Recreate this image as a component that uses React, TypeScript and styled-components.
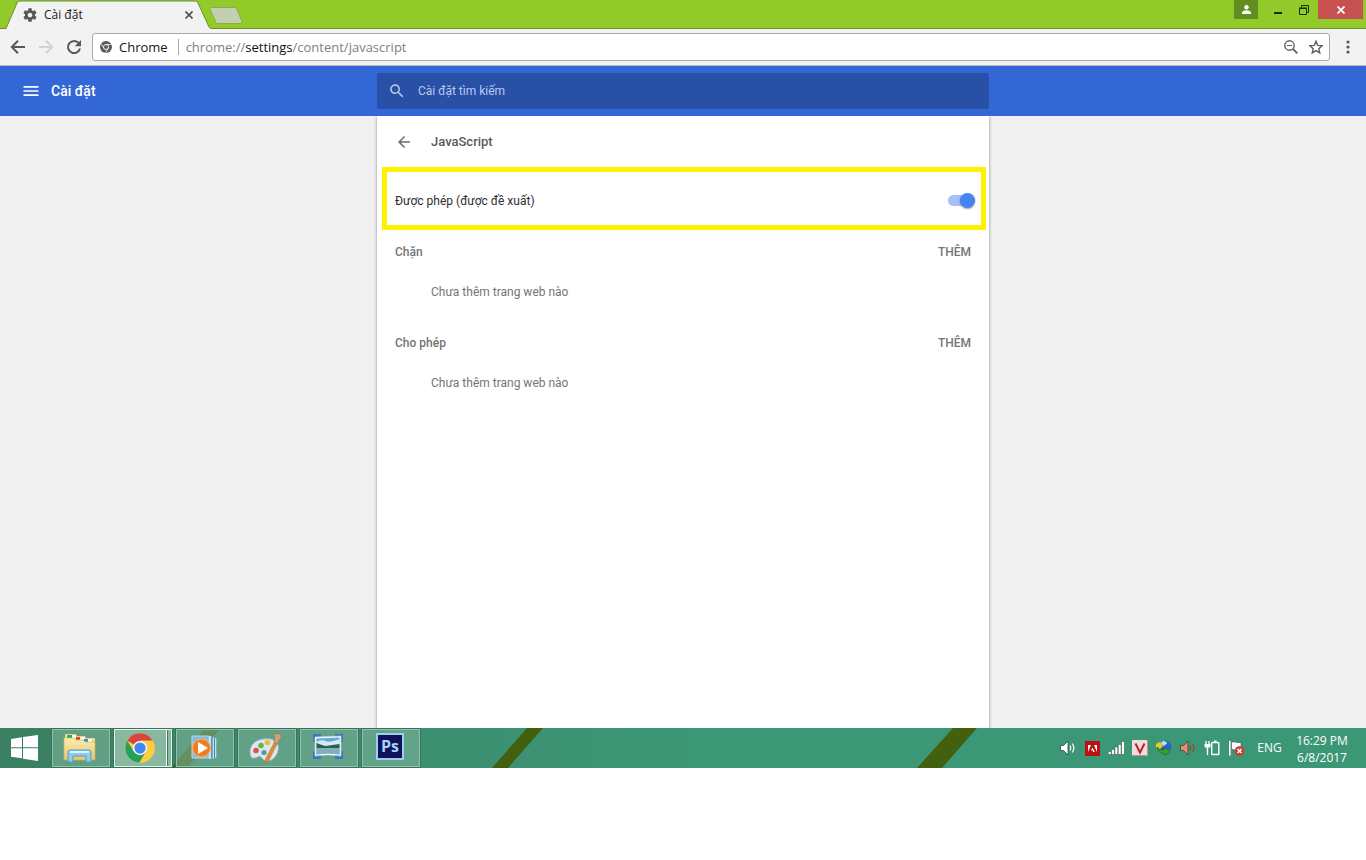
import React, { useState } from "react";
import styled, { createGlobalStyle } from "styled-components";

const GlobalStyle = createGlobalStyle`
  *, *::before, *::after { box-sizing: border-box; }
  body {
    margin: 0;
    background: #ffffff;
    font-family: Roboto, "Liberation Sans", sans-serif;
    font-size: 12px;
    line-height: 16px;
  }
  button, input { font: inherit; color: inherit; }
  svg { display: block; flex: none; }
`;

const systemFont = `"Open Sans", "Noto Sans", sans-serif`;

const PlainButton = styled.button`
  display: flex;
  align-items: center;
  justify-content: center;
  flex: none;
  padding: 0;
  border: 0;
  background: transparent;
  cursor: pointer;
`;

/* ---------- Browser frame ---------- */

const TabStrip = styled.header`
  display: flex;
  align-items: flex-start;
  height: 29px;
  padding-left: 6px;
  background: #92ca2a;
  border-bottom: 1px solid #6b8f2c;
  font-family: ${systemFont};
`;

const Tab = styled.div`
  position: relative;
  display: flex;
  align-items: center;
  width: 206px;
  height: 29px;
  padding: 1px 16px 0 16px;
  gap: 6px;
  color: #1c1c1c;
`;

const TabShape = styled.svg`
  position: absolute;
  left: 0;
  top: 0;
`;

const TabIcon = styled.svg`
  position: relative;
`;

const TabTitle = styled.span`
  position: relative;
  flex: 1;
  font-size: 12px;
`;

const TabClose = styled(PlainButton)`
  position: relative;
  width: 14px;
  height: 14px;
`;

const NewTab = styled(PlainButton)`
  height: 29px;
  width: 36px;
  margin-left: -4px;
`;

const WindowButtons = styled.div`
  display: flex;
  margin-left: auto;
  padding-right: 3px;
`;

const WindowButton = styled(PlainButton)<{ $width: number; $fill?: string }>`
  width: ${(p) => p.$width}px;
  height: 19px;
  background: ${(p) => p.$fill ?? "transparent"};
`;

const CloseWindow = styled(WindowButton)`
  margin-left: 8px;
`;

const Toolbar = styled.nav`
  display: flex;
  align-items: center;
  height: 37px;
  padding: 0 4px;
  background: #f2f2f2;
  border-bottom: 1px solid #b4bccb;
  font-family: ${systemFont};
`;

const ToolButton = styled(PlainButton)`
  width: 28px;
  height: 28px;
`;

const Omnibox = styled.div`
  display: flex;
  align-items: center;
  flex: 1;
  height: 28px;
  margin: 0 4px;
  padding: 0 1px 0 7px;
  background: #ffffff;
  border: 1px solid #a9a9a9;
  border-radius: 3px;
  font-size: 13px;
  line-height: 20px;
`;

const SiteChip = styled(PlainButton)`
  gap: 7px;
  color: #161616;
`;

const Divider = styled.span`
  width: 1px;
  height: 16px;
  margin: 0 7px 0 10px;
  background: #a6a6a6;
`;

const Address = styled.button`
  flex: 1;
  padding: 0;
  border: 0;
  background: transparent;
  color: #808080;
  text-align: left;
  cursor: text;
`;

const AddressHost = styled.span`
  color: #111111;
`;

const AddressInput = styled.input`
  flex: 1;
  padding: 0;
  border: 0;
  outline: 0;
`;

const OmniButton = styled(PlainButton)`
  width: 25px;
  height: 24px;
`;

/* ---------- Settings page ---------- */

const columns = "minmax(0, 1fr) minmax(0, 612px) minmax(0, 1fr)";

const SettingsBar = styled.header`
  display: grid;
  grid-template-columns: ${columns};
  align-items: center;
  height: 50px;
  background: #3367d6;
  color: #ffffff;
`;

const Brand = styled.div`
  display: flex;
  align-items: center;
  gap: 10px;
  padding-left: 21px;
`;

const BrandTitle = styled.h1`
  margin: 0;
  font-size: 14px;
  font-weight: 500;
`;

const Search = styled.label`
  display: flex;
  align-items: center;
  gap: 12px;
  height: 36px;
  padding: 0 11px;
  border-radius: 2px;
  background: #2850a7;
`;

const SearchInput = styled.input`
  flex: 1;
  padding: 0;
  border: 0;
  outline: 0;
  background: transparent;
  font-size: 12px;
  &::placeholder {
    color: #b9c9ec;
    opacity: 1;
  }
`;

const SettingsBody = styled.main`
  display: grid;
  grid-template-columns: ${columns};
  min-height: 612px;
  background: #f0f0f0;
  overflow: hidden;
`;

const Card = styled.section`
  grid-column: 2;
  background: #ffffff;
  box-shadow: 0 1px 3px rgba(0, 0, 0, 0.45);
  color: #757575;
`;

const CardHead = styled.div`
  display: flex;
  align-items: center;
  gap: 18px;
  height: 51px;
  padding-left: 18px;
`;

const CardTitle = styled.h2`
  margin: 0;
  color: #5a5a5a;
  font-size: 13px;
  font-weight: 500;
`;

const ToggleRow = styled.label`
  display: flex;
  align-items: center;
  justify-content: space-between;
  height: 63px;
  margin: 0 3px 0 5px;
  padding: 4px 6px 0 8px;
  border: 5px solid #fff200;
  color: #2e2e2e;
`;

const Switch = styled.input`
  appearance: none;
  position: relative;
  width: 27px;
  height: 16px;
  margin: 0;
  cursor: pointer;
  &::before {
    content: "";
    position: absolute;
    left: 0;
    top: 2px;
    width: 25px;
    height: 11px;
    border-radius: 6px;
    background: #bdbdbd;
  }
  &::after {
    content: "";
    position: absolute;
    left: 0;
    top: 0;
    width: 15px;
    height: 15px;
    border-radius: 50%;
    background: #fafafa;
    box-shadow: 0 1px 2px rgba(0, 0, 0, 0.4);
  }
  &:checked::before { background: #a3c0fa; }
  &:checked::after { left: 12px; background: #4484f4; }
`;

const SiteGroup = styled.section`
  margin-bottom: 11px;
`;

const GroupHead = styled.div`
  display: flex;
  align-items: center;
  justify-content: space-between;
  height: 44px;
  padding: 0 18px;
`;

const GroupTitle = styled.h3`
  margin: 0;
  font-size: 12px;
  font-weight: 500;
`;

const AddButton = styled(PlainButton)`
  font-weight: 500;
`;

const EmptyNote = styled.p`
  display: flex;
  align-items: center;
  height: 36px;
  margin: 0;
  padding-left: 54px;
`;

/* ---------- Windows task bar ---------- */

const TaskBar = styled.footer`
  position: relative;
  display: flex;
  align-items: center;
  height: 40px;
  background: linear-gradient(90deg, #3a8062 0, #3c8f71 440px, #3c9776 700px, #3c9776 100%);
  color: #ffffff;
  font-family: ${systemFont};
  overflow: hidden;
`;

const Wallpaper = styled.svg`
  position: absolute;
  left: 0;
  top: 0;
`;

const StartButton = styled(PlainButton)`
  position: relative;
  width: 52px;
  height: 40px;
  padding-right: 4px;
`;

const Apps = styled.div`
  position: relative;
  display: flex;
  gap: 4px;
`;

const AppButton = styled(PlainButton)<{ $active?: boolean }>`
  width: 58px;
  height: 38px;
  padding-right: ${(p) => (p.$active ? 6 : 2)}px;
  border: 1px solid ${(p) => (p.$active ? "#e6f2ec" : "#94bfae")};
  outline: 1px solid #35735c;
  background: ${(p) =>
    p.$active
      ? "linear-gradient(90deg, #8ab7a0 0 51px, #ffffff 51px 52px, #3f7b66 52px 53px, #8ab7a0 53px)"
      : "rgba(130, 182, 156, 0.55)"};
`;

const Tray = styled.div`
  position: relative;
  display: flex;
  align-items: center;
  margin-left: auto;
  padding-right: 16px;
`;

const TrayButton = styled(PlainButton)`
  width: 24px;
  height: 40px;
`;

const Language = styled(PlainButton)`
  width: 43px;
  font-size: 12px;
`;

const Clock = styled.time`
  display: block;
  width: 56px;
  margin-left: 3px;
  padding-top: 2px;
  font-size: 12px;
  line-height: 17px;
  text-align: center;
`;

/* ---------- Drawings ---------- */

const Gear = ({ size = 16 }: { size?: number }) => (
  <TabIcon width={size} height={size} viewBox="0 0 24 24" fill="#55585b" aria-hidden>
    <path d="M19.43 12.98c.04-.32.07-.64.07-.98s-.03-.66-.07-.98l2.11-1.65c.19-.15.24-.42.12-.64l-2-3.46c-.12-.22-.39-.3-.61-.22l-2.49 1c-.52-.4-1.08-.73-1.69-.98l-.38-2.65C14.46 2.18 14.25 2 14 2h-4c-.25 0-.46.18-.49.42l-.38 2.65c-.61.25-1.17.59-1.69.98l-2.49-1c-.23-.09-.49 0-.61.22l-2 3.46c-.13.22-.07.49.12.64l2.11 1.65c-.04.32-.07.65-.07.98s.03.66.07.98l-2.11 1.65c-.19.15-.24.42-.12.64l2 3.46c.12.22.39.3.61.22l2.49-1c.52.4 1.08.73 1.69.98l.38 2.65c.03.24.24.42.49.42h4c.25 0 .46-.18.49-.42l.38-2.65c.61-.25 1.17-.59 1.69-.98l2.49 1c.23.09.49 0 .61-.22l2-3.46c.12-.22.07-.49-.12-.64l-2.11-1.65zM12 15.5c-1.93 0-3.5-1.57-3.5-3.5s1.57-3.5 3.5-3.5 3.5 1.57 3.5 3.5-1.57 3.5-3.5 3.5z" />
  </TabIcon>
);

const Glyph = ({ d, size, fill }: { d: string; size: number; fill: string }) => (
  <svg width={size} height={size} viewBox="0 0 24 24" fill={fill} aria-hidden>
    <path d={d} />
  </svg>
);

const arrowPath = "M20 11H7.83l5.59-5.59L12 4l-8 8 8 8 1.41-1.41L7.83 13H20v-2z";
const searchPath =
  "M15.5 14h-.79l-.28-.27C15.41 12.59 16 11.11 16 9.5 16 5.91 13.09 3 9.5 3S3 5.91 3 9.5 5.91 16 9.5 16c1.61 0 3.09-.59 4.23-1.57l.27.28v.79l5 4.99L20.49 19l-4.99-5zm-6 0C7.01 14 5 11.99 5 9.5S7.01 5 9.5 5 14 7.01 14 9.5 11.99 14 9.5 14z";
const menuPath = "M3 18h18v-2H3v2zm0-5h18v-2H3v2zm0-7v2h18V6H3z";

const NavArrow = ({ color, flip }: { color: string; flip?: boolean }) => (
  <svg width="16" height="16" viewBox="0 0 16 16" fill="none" stroke={color} strokeWidth="2" aria-hidden>
    <path d="M15 8H2M8 1.8 1.8 8 8 14.2" transform={flip ? "rotate(180 8 8)" : undefined} />
  </svg>
);

const Reload = () => (
  <svg width="16" height="16" viewBox="0 0 16 16" aria-hidden>
    <path d="M12.9 4.2A6.1 6.1 0 1 0 14 9.6" fill="none" stroke="#55585b" strokeWidth="2" />
    <path d="M15 1v6.2H8.8z" fill="#55585b" />
  </svg>
);

const MonoChrome = () => (
  <svg width="12" height="12" viewBox="0 0 24 24" aria-hidden>
    <circle cx="12" cy="12" r="12" fill="#5b5b5b" />
    <circle cx="12" cy="12" r="5" fill="#5b5b5b" stroke="#fff" strokeWidth="1.8" />
    <path d="M12 7h11M7.7 14.5 2.2 5M16.3 14.5 10.8 24" stroke="#fff" strokeWidth="1.5" />
  </svg>
);

const WindowsLogo = () => (
  <svg width="27" height="26" viewBox="0 0 27 26" fill="#fff" aria-hidden>
    <path d="M0 4 11 2.3v10H0zM12 2.1 27 0v12.3H12zM0 13.3h11v10L0 21.7zM12 13.3h15V26l-15-2.3z" />
  </svg>
);

const Explorer = () => (
  <svg width="34" height="30" viewBox="0 0 34 30" aria-hidden>
    <defs>
      <linearGradient id="folder" x1="0" y1="0" x2="0" y2="1">
        <stop offset="0" stopColor="#fbeeb0" />
        <stop offset="1" stopColor="#e6c768" />
      </linearGradient>
    </defs>
    <path d="M2 2q0-1 1-1h10l1 2h8l1 2h8q1 0 1 1v3H2z" fill="#ecd588" />
    <path d="M3 2h10v3H3z" fill="#f6faf4" />
    <path d="M4 2h5v3H4z" fill="#2fae3c" />
    <path d="M12 4h10v3H12z" fill="#f8f5ee" />
    <path d="M13 4h4v3h-4z" fill="#d8482b" />
    <path d="M21 6h8v3h-8z" fill="#f8f5ee" />
    <path d="M21 6h4v3h-4z" fill="#3a8fd6" />
    <path d="M1 5h10l2 2h7l2 2h9l1 1v16q0 1-1 1H2q-1 0-1-1z" fill="url(#folder)" stroke="#d8b65a" strokeWidth=".7" />
    <path d="M5 29V19q0-2 2-2h19q2 0 2 2v10h-5v-6H10v6z" fill="#8ecbee" stroke="#4f9fcf" />
    <path d="M7 19h19" stroke="#dff4ff" strokeWidth="2" />
  </svg>
);

const ChromeLogo = () => (
  <svg width="30" height="30" viewBox="0 0 48 48" aria-hidden>
    <circle cx="24" cy="24" r="23.5" fill="#fccd45" />
    <path d="M24 24 3.6 12.3A23.5 23.5 0 0 1 44.4 12.5H24z" fill="#d8453c" />
    <path d="M3.6 12.3A23.5 23.5 0 0 0 23 47.5L33.5 30 24 24l-9.900 5.7z" fill="#24a05a" />
    <path d="M24 12.5h20.4A23.5 23.5 0 0 1 23 47.5L34 29.7z" fill="#fccd45" />
    <circle cx="24" cy="24" r="11.4" fill="#f4f6f8" />
    <circle cx="24" cy="24" r="9" fill="#4285f4" />
  </svg>
);

const MediaPlayer = () => (
  <svg width="26" height="26" viewBox="0 0 26 26" aria-hidden>
    <path d="M1 1h17v22H1z" fill="#85b9d8" stroke="#b5daec" />
    <path d="M18 1h2.500v23H18zM21.500 2H23v22h-1.500zM24 3h1.300v20H24z" fill="#c3e3f3" />
    <path d="M20.800 1.500V24M23.500 2.500V24" stroke="#3f87b8" strokeWidth="1" />
    <circle cx="10.500" cy="13" r="9" fill="#f07c1f" stroke="#f9b87c" strokeWidth="1" />
    <path d="M7 7v12l10-6z" fill="#fff" />
  </svg>
);

const Paint = () => (
  <svg width="34" height="32" viewBox="0 0 34 32" aria-hidden>
    <path d="M14 7C6 8 1 13 1 20c0 5 2 7 5 6 3 0 3-3 6-1 3 5 8 5 12 2 5-4 7-12 4-16-3-4-8-5-14-4z" fill="#dbe7ee" stroke="#8fb0c4" strokeWidth=".8" />
    <circle cx="7" cy="18.500" r="2.800" fill="#e0524b" />
    <circle cx="12" cy="13.500" r="2.800" fill="#66b54a" />
    <circle cx="18.500" cy="10.500" r="2.800" fill="#edbb3c" />
    <circle cx="15" cy="20.500" r="2.600" fill="#5a9a97" />
    <path d="M16 31q0-3 1-5l8-15 3 1-8 16q-2 3-4 3z" fill="#e28a3b" stroke="#b8692a" strokeWidth=".5" />
    <path d="m25 11 3 1 4-6q1-3-1-4-4-1-6 0 1 4 0 9z" fill="#c8a577" stroke="#8e7350" strokeWidth=".6" />
  </svg>
);

const Picture = () => (
  <svg width="30" height="28" viewBox="0 0 30 28" aria-hidden>
    <path d="M0 0h8v4H4v4H0zM22 0h8v8h-4V4h-4zM0 17h4v4h4v4H0zM26 17h4v8h-8v-4h4z" fill="#3b7bb7" />
    <path d="M2 3 28 2v20q-13-2-26 0z" fill="#f3f8f9" stroke="#c3d8e0" strokeWidth=".6" />
    <path d="M3.500 4.500 26.500 3.500v17q-12-2-23 0z" fill="#62a9dd" />
    <path d="M3.500 8q5-3 9-1t14-2v7h-23z" fill="#d4ebf4" />
    <path d="M3.500 9q5 2 9 3l14-2v4h-23z" fill="#2d6150" />
    <path d="M3.500 14h23v6.500q-12-2-23 0z" fill="#7fb0bb" />
  </svg>
);

const Photoshop = () => (
  <svg width="28" height="30" viewBox="0 0 28 30" aria-hidden>
    <path d="M0 0h28v27H0z" fill="#9fcdf2" />
    <path d="M2 2h24v23H2z" fill="#10125a" />
    <text x="14" y="19" textAnchor="middle" fontFamily="Open Sans, sans-serif" fontSize="16" fontWeight="700" fill="#a6d2fa">
      Ps
    </text>
  </svg>
);

const Speaker = ({ fill, wave }: { fill: string; wave: string }) => (
  <svg width="16" height="16" viewBox="0 0 16 16" aria-hidden>
    <path d="M.5 5.500h3L8 1v14l-4.500-4.500h-3z" fill={fill} stroke="#29483c" strokeWidth=".8" />
    <path d="M10 5.500q1.500 2.500 0 5M12.300 3.500q3 4.500 0 9" fill="none" stroke={wave} strokeWidth="1.200" />
  </svg>
);

const Adobe = () => (
  <svg width="15" height="15" viewBox="0 0 15 15" aria-hidden>
    <path d="M0 0h15v15H0z" fill="#b9120f" />
    <path d="M3 4h3L3 11zM12 4H9l3 7zM7.500 6.500 9.800 11H8.300L7.600 9.500H6z" fill="#fff" />
  </svg>
);

const Signal = () => (
  <svg width="17" height="14" viewBox="0 0 17 14" fill="#fff" stroke="#22543f" strokeWidth=".5" aria-hidden>
    <path d="M.3 10.500h2.900v3H.3zM3.600 8.500h2.900v5H3.600zM6.900 6h2.900v7.500H6.900zM10.200 3.500h2.900v10h-2.900zM13.500.5h2.900v13h-2.900z" />
  </svg>
);

const Unikey = () => (
  <svg width="16" height="16" viewBox="0 0 16 16" aria-hidden>
    <path d="M0 0h16v16H0z" fill="#f3dcdc" />
    <path d="M0 15.500h15.500V0" fill="none" stroke="#c88f8f" />
    <path d="M3.500 3.500 8 12.500l4.500-9" fill="none" stroke="#b3262d" strokeWidth="2" />
  </svg>
);

const DownloadManager = () => (
  <svg width="16" height="16" viewBox="0 0 16 16" aria-hidden>
    <circle cx="9.500" cy="6.500" r="6" fill="#2467bd" />
    <path d="M7 1q4 0 4 2.500L8 6 5 3z" fill="#bfe0f5" />
    <path d="M0 4q3-3 6-1l1 3-3 3-4-2z" fill="#e9c92f" />
    <path d="M1 7q3 4 7 3V7.500l6 4-5 4v-2q-7 0-8-6.500z" fill="#3ca02f" stroke="#1e6416" strokeWidth=".6" />
  </svg>
);

const Battery = () => (
  <svg width="16" height="16" viewBox="0 0 16 16" fill="none" stroke="#fff" strokeWidth="1.400" aria-hidden>
    <path d="M8.500 2.500H14q.8 0 .8.800v10.400q0 .8-.8.800H8.500q-.8 0-.8-.8V3.300q0-.8.800-.8zM10 1.200h2.500" />
    <path d="M2 1v3M5 1v3" strokeWidth="1.300" />
    <path d="M.5 4h6v2.500q0 1-1 1h-4q-1 0-1-1z" fill="#fff" stroke="none" />
    <path d="M3.500 7v8" />
  </svg>
);

const ActionFlag = () => (
  <svg width="17" height="16" viewBox="0 0 17 16" aria-hidden>
    <path d="M1.800 1v14.500" stroke="#fff" strokeWidth="1.600" />
    <path d="M3.500 2h4q2 1 5.500.5V10H7L3.500 9z" fill="#fff" stroke="#29483c" strokeWidth=".5" />
    <circle cx="11.500" cy="11" r="4.800" fill="#d3382f" />
    <path d="m9.500 9 4 4m0-4-4 4" stroke="#fff" strokeWidth="1.600" />
  </svg>
);

const stripes = [
  "M205 0h16l-34 40h-16z",
  "M527 0h16l-35 40h-16z",
  "M953 0h24l-35 40h-25z",
];

const apps = [
  { name: "File Explorer", Icon: Explorer },
  { name: "Google Chrome", Icon: ChromeLogo, active: true },
  { name: "Windows Media Player", Icon: MediaPlayer },
  { name: "Paint", Icon: Paint },
  { name: "Photo viewer", Icon: Picture },
  { name: "Photoshop", Icon: Photoshop },
];

const tray = [
  { name: "Volume", icon: <Speaker fill="#fff" wave="#fff" /> },
  { name: "Adobe updates", icon: <Adobe /> },
  { name: "Network", icon: <Signal /> },
  { name: "Unikey", icon: <Unikey /> },
  { name: "Download manager", icon: <DownloadManager /> },
  { name: "Audio driver", icon: <Speaker fill="#f08a6c" wave="#8f4a32" /> },
  { name: "Battery", icon: <Battery /> },
  { name: "Action center", icon: <ActionFlag /> },
];

const groups = ["Chặn", "Cho phép"];

function AddressBar() {
  const [editing, setEditing] = useState(false);
  const [url, setUrl] = useState("chrome://settings/content/javascript");
  if (editing) {
    return (
      <AddressInput
        autoFocus
        aria-label="Address"
        value={url}
        onChange={(e) => setUrl(e.target.value)}
        onBlur={() => setEditing(false)}
      />
    );
  }
  const [, scheme, host, path] = url.match(/^([a-z]+:\/\/)?([^/]*)(.*)$/) ?? [];
  return (
    <Address type="button" onClick={() => setEditing(true)}>
      {scheme}
      <AddressHost>{host}</AddressHost>
      {path}
    </Address>
  );
}

export default function App() {
  const [allowed, setAllowed] = useState(true);

  return (
    <>
      <GlobalStyle />

      <TabStrip>
        <Tab>
          <TabShape width="206" height="29" viewBox="0 0 206 29" aria-hidden>
            <path d="M0 29 11 3q1-2 3-2h175q2 0 3 2l11 24q1 1.500 3 1.500V29z" fill="#f2f2f2" />
            <path d="M0 28.500 11 3q1-2 3-2h175q2 0 3 2l11 24q1 1.500 3 1.500" fill="none" stroke="#6b8f2c" />
          </TabShape>
          <Gear />
          <TabTitle>Cài đặt</TabTitle>
          <TabClose type="button" aria-label="Close tab">
            <svg width="8" height="8" viewBox="0 0 8 8" stroke="#555" strokeWidth="1.700" aria-hidden>
              <path d="m.5.5 7 7m0-7-7 7" />
            </svg>
          </TabClose>
        </Tab>
        <NewTab type="button" aria-label="New tab">
          <svg width="36" height="29" viewBox="0 0 36 29" aria-hidden>
            <path d="M2.500 7.500h24q1.500 0 2 1l5.500 13q.5 2-1 2H10q-1.500 0-2-1L2 9q-.5-1.500.5-1.500z" fill="#c3d0b0" stroke="#8aac4b" />
          </svg>
        </NewTab>
        <WindowButtons>
          <WindowButton type="button" $width={24} $fill="#618e21" aria-label="Profile">
            <svg width="9" height="9" viewBox="0 0 9 9" fill="#fff" aria-hidden>
              <circle cx="4.500" cy="2.200" r="2.200" />
              <path d="M0 9V7.200Q1 5.300 4.500 5.300T9 7.200V9z" />
            </svg>
          </WindowButton>
          <WindowButton type="button" $width={40} aria-label="Minimize">
            <svg width="8" height="9" viewBox="0 0 8 9" aria-hidden>
              <path d="M0 7h8v2H0z" fill="#1d2a08" />
            </svg>
          </WindowButton>
          <WindowButton type="button" $width={12} aria-label="Restore">
            <svg width="10" height="10" viewBox="0 0 10 10" fill="none" stroke="#1d2a08" aria-hidden>
              <path d="M.5 3.500h7v6h-7zM0 3h8M2.500 2.500v-2h7v7H8" />
            </svg>
          </WindowButton>
          <CloseWindow type="button" $width={45} $fill="#c75050" aria-label="Close">
            <svg width="8" height="8" viewBox="0 0 8 8" stroke="#fff" strokeWidth="1.700" aria-hidden>
              <path d="m.5.5 7 7m0-7-7 7" />
            </svg>
          </CloseWindow>
        </WindowButtons>
      </TabStrip>

      <Toolbar>
        <ToolButton type="button" aria-label="Back"><NavArrow color="#55585b" /></ToolButton>
        <ToolButton type="button" aria-label="Forward"><NavArrow color="#d2d2d2" flip /></ToolButton>
        <ToolButton type="button" aria-label="Reload"><Reload /></ToolButton>
        <Omnibox>
          <SiteChip type="button"><MonoChrome />Chrome</SiteChip>
          <Divider />
          <AddressBar />
          <OmniButton type="button" aria-label="Zoom">
            <svg width="14" height="14" viewBox="0 0 14 14" fill="none" stroke="#616161" aria-hidden>
              <circle cx="5.500" cy="5.500" r="4.700" strokeWidth="1.400" />
              <path d="M3 5.500h5" />
              <path d="m9 9 4.400 4.400" strokeWidth="1.800" />
            </svg>
          </OmniButton>
          <OmniButton type="button" aria-label="Bookmark">
            <svg width="14" height="14" viewBox="0 0 24 24" fill="none" stroke="#616161" strokeWidth="2.400" aria-hidden>
              <path d="m12 2 2.900 7.200 7.600.6-5.800 5 1.800 7.400L12 18.200l-6.500 4 1.800-7.400-5.800-5 7.600-.6z" />
            </svg>
          </OmniButton>
        </Omnibox>
        <ToolButton type="button" aria-label="Menu">
          <svg width="4" height="14" viewBox="0 0 4 14" fill="#55585b" aria-hidden>
            <circle cx="2" cy="2" r="1.600" />
            <circle cx="2" cy="7" r="1.600" />
            <circle cx="2" cy="12" r="1.600" />
          </svg>
        </ToolButton>
      </Toolbar>

      <SettingsBar>
        <Brand>
          <PlainButton type="button" aria-label="Menu">
            <Glyph d={menuPath} size={20} fill="#fff" />
          </PlainButton>
          <BrandTitle>Cài đặt</BrandTitle>
        </Brand>
        <Search>
          <Glyph d={searchPath} size={18} fill="#bccbea" />
          <SearchInput type="text" placeholder="Cài đặt tìm kiếm" aria-label="Cài đặt tìm kiếm" />
        </Search>
      </SettingsBar>

      <SettingsBody>
        <Card>
          <CardHead>
            <PlainButton type="button" aria-label="Back">
              <Glyph d={arrowPath} size={18} fill="#6b6b6b" />
            </PlainButton>
            <CardTitle>JavaScript</CardTitle>
          </CardHead>
          <ToggleRow>
            Được phép (được đề xuất)
            <Switch type="checkbox" role="switch" checked={allowed} onChange={(e) => setAllowed(e.target.checked)} />
          </ToggleRow>
          {groups.map((title) => (
            <SiteGroup key={title}>
              <GroupHead>
                <GroupTitle>{title}</GroupTitle>
                <AddButton type="button">THÊM</AddButton>
              </GroupHead>
              <EmptyNote>Chưa thêm trang web nào</EmptyNote>
            </SiteGroup>
          ))}
        </Card>
      </SettingsBody>

      <TaskBar>
        <Wallpaper width="1366" height="40" viewBox="0 0 1366 40" fill="#43600f" aria-hidden>
          {stripes.map((d) => <path key={d} d={d} />)}
        </Wallpaper>
        <StartButton type="button" aria-label="Start"><WindowsLogo /></StartButton>
        <Apps>
          {apps.map(({ name, Icon, active }) => (
            <AppButton key={name} type="button" aria-label={name} $active={active}><Icon /></AppButton>
          ))}
        </Apps>
        <Tray>
          {tray.map(({ name, icon }) => (
            <TrayButton key={name} type="button" aria-label={name}>{icon}</TrayButton>
          ))}
          <Language type="button">ENG</Language>
          <Clock dateTime="2017-06-08T16:29">16:29 PM<br />6/8/2017</Clock>
        </Tray>
      </TaskBar>
    </>
  );
}
